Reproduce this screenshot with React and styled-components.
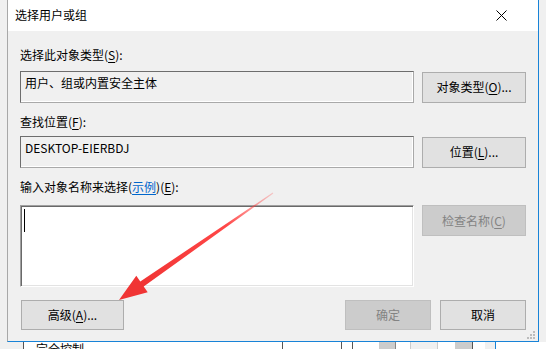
import React from 'react';
import styled, { createGlobalStyle } from 'styled-components';

const GlobalStyle = createGlobalStyle`
  html, body {
    margin: 0;
    padding: 0;
    background: #f0f0f0;
    overflow: hidden;
  }
  body {
    font-family: "Noto Sans CJK SC", "Noto Sans", sans-serif;
    font-size: 12px;
    color: #000;
  }
`;

const Screen = styled.div`
  width: 546px;
  height: 349px;
  overflow: hidden;
  display: flex;
  flex-direction: column;
`;

const Window = styled.div`
  position: relative;
  margin-left: 7px;
  width: 532px;
  height: 342px;
  box-sizing: border-box;
  border-left: 1px solid #a8a8a8;
  border-right: 1px solid #1883d7;
  border-bottom: 1px solid #1883d7;
  background: #f0f0f0;
  display: flex;
  flex-direction: column;
  flex-shrink: 0;
`;

const TitleBar = styled.div`
  height: 31px;
  background: #fff;
  display: flex;
  align-items: center;
  justify-content: space-between;
  padding: 0 31px 0 7px;
  flex-shrink: 0;
`;

const Title = styled.div`
  font-size: 12px;
  line-height: 16px;
  margin-top: -1px;
`;

const Close = styled.svg`
  width: 11px;
  height: 11px;
  display: block;
`;

const Body = styled.div`
  flex: 1;
  display: flex;
  flex-direction: column;
  padding: 0 12px;
`;

const Label = styled.div`
  line-height: 16px;
  height: 16px;
  white-space: nowrap;
  margin-top: ${(p) => p.$top}px;
  margin-bottom: ${(p) => p.$bottom}px;
`;

const Key = styled.span`
  text-decoration: underline;
  text-underline-offset: 2px;
`;

const Link = styled.span`
  color: #0066cc;
  text-decoration: underline;
  text-underline-offset: 2px;
`;

const Row = styled.div`
  display: grid;
  grid-template-columns: 394px 104px;
  column-gap: 8px;
  align-items: ${(p) => p.$align || 'center'};
`;

const Field = styled.div`
  height: 32px;
  box-sizing: border-box;
  border: 1px solid;
  border-color: #6d6d6d #a9a9a9 #a9a9a9 #6d6d6d;
  box-shadow: inset -1px -1px 0 #fff;
  padding: 3px 4px 0;
  line-height: 16px;
  white-space: nowrap;
`;

const TextArea = styled.div`
  height: 82px;
  box-sizing: border-box;
  background: #fff;
  border: 1px solid;
  border-color: #a0a0a0 #fff #fff #a0a0a0;
  box-shadow: inset 1px 1px 0 #696969, inset -1px -1px 0 #e3e3e3;
  padding: 3px 0 0 3px;
`;

const Caret = styled.div`
  width: 1px;
  height: 23px;
  background: #000;
`;

const Button = styled.div`
  height: ${(p) => p.$h || 31}px;
  width: ${(p) => (p.$w ? `${p.$w}px` : 'auto')};
  box-sizing: border-box;
  border: 1px solid ${(p) => (p.$disabled ? '#bfbfbf' : '#adadad')};
  background: ${(p) => (p.$disabled ? '#cccccc' : '#e1e1e1')};
  color: ${(p) => (p.$disabled ? '#838383' : '#000')};
  display: flex;
  align-items: center;
  justify-content: center;
  white-space: nowrap;
  line-height: 16px;
`;

const Footer = styled.div`
  display: flex;
  align-items: center;
  margin-top: 13px;
  padding-left: 1px;
`;

const Spacer = styled.div`
  flex: 1;
`;

const FooterButtons = styled.div`
  display: flex;
  gap: 9px;
`;

const Grip = styled.svg`
  position: absolute;
  right: 3px;
  bottom: 2px;
  width: 8px;
  height: 8px;
`;

const Overlay = styled.svg`
  position: absolute;
  left: -8px;
  top: 0;
  width: 546px;
  height: 342px;
  pointer-events: none;
`;

const Behind = styled.div`
  height: 7px;
  display: flex;
  background: #fff;
  overflow: hidden;
`;

const Cell = styled.div`
  width: ${(p) => p.$w}px;
  flex-shrink: 0;
  background: ${(p) => p.$bg || '#fff'};
  box-sizing: border-box;
  border-left: ${(p) => (p.$line ? `1px solid ${p.$line}` : 'none')};
  position: relative;
  overflow: hidden;
`;

const BehindText = styled.div`
  padding-left: 12px;
  margin-top: -1px;
  line-height: 16px;
  white-space: nowrap;
`;

const Arrow = () => (
  <Overlay viewBox="0 0 546 342">
    <defs>
      <linearGradient id="fade" x1="273" y1="193" x2="140" y2="285" gradientUnits="userSpaceOnUse">
        <stop offset="0" stopColor="#f44" stopOpacity="0.25" />
        <stop offset="0.35" stopColor="#f33" stopOpacity="0.9" />
        <stop offset="1" stopColor="#f03434" stopOpacity="1" />
      </linearGradient>
    </defs>
    <polygon
      fill="url(#fade)"
      points="119,300 136.3,275.8 140.3,281.5 272.7,192.6 273.3,193.4 143.7,286.5 147.7,292.2"
    />
  </Overlay>
);

const App = () => (
  <Screen>
    <GlobalStyle />
    <Window>
      <TitleBar>
        <Title>选择用户或组</Title>
        <Close viewBox="0 0 11 11">
          <path d="M0.5 0.5 L10.5 10.5 M10.5 0.5 L0.5 10.5" stroke="#000" strokeWidth="1" />
        </Close>
      </TitleBar>
      <Body>
        <Label $top={16} $bottom={8}>
          选择此对象类型(<Key>S</Key>):
        </Label>
        <Row>
          <Field>用户、组或内置安全主体</Field>
          <Button>对象类型(<Key>O</Key>)...</Button>
        </Row>
        <Label $top={11} $bottom={6}>
          查找位置(<Key>F</Key>):
        </Label>
        <Row>
          <Field>DESKTOP-EIERBDJ</Field>
          <Button>位置(<Key>L</Key>)...</Button>
        </Row>
        <Label $top={11} $bottom={10}>
          输入对象名称来选择(<Link>示例</Link>)(<Key>E</Key>):
        </Label>
        <Row $align="start">
          <TextArea>
            <Caret />
          </TextArea>
          <Button $disabled>检查名称(<Key>C</Key>)</Button>
        </Row>
        <Footer>
          <Button $w={103} $h={30}>高级(<Key>A</Key>)...</Button>
          <Spacer />
          <FooterButtons>
            <Button $w={86} $h={30} $disabled>确定</Button>
            <Button $w={86} $h={30}>取消</Button>
          </FooterButtons>
        </Footer>
      </Body>
      <Grip viewBox="0 0 8 8">
        <g fill="#bcbcbc">
          <rect x="6" y="0" width="2" height="2" />
          <rect x="3" y="3" width="2" height="2" />
          <rect x="6" y="3" width="2" height="2" />
          <rect x="0" y="6" width="2" height="2" />
          <rect x="3" y="6" width="2" height="2" />
          <rect x="6" y="6" width="2" height="2" />
        </g>
      </Grip>
      <Arrow />
    </Window>
    <Behind>
      <Cell $w={23} $bg="#f0f0f0" />
      <Cell $w={259} $line="#555">
        <BehindText>完全控制</BehindText>
      </Cell>
      <Cell $w={59} $line="#555" />
      <Cell $w={11} $line="#555" />
      <Cell $w={27} $line="#555" />
      <Cell $w={16} $bg="#cccccc" />
      <Cell $w={15} $line="#888" />
      <Cell $w={27} $bg="#f0f0f0" $line="#ccc" />
      <Cell $w={18} $line="#ccc" />
      <Cell $w={17} $bg="#cccccc" />
      <Cell $w={13} $line="#555" />
      <Cell $w={10} $bg="#f0f0f0" />
      <Cell $w={51} $line="#1883d7" />
    </Behind>
  </Screen>
);

export default App;
